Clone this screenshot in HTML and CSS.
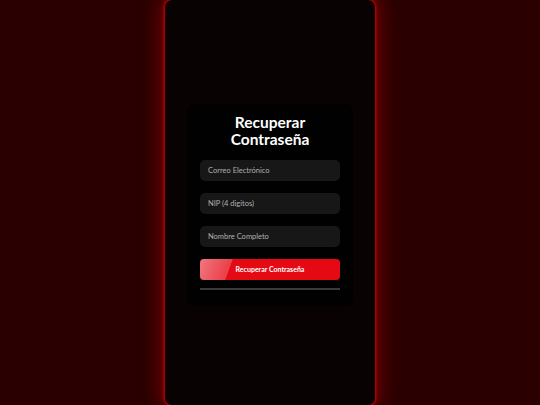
FILE: index.html
```html
<!DOCTYPE html>
<html lang="es">
<head>
<meta charset="utf-8">
<title>Recuperar Contraseña</title>
<link rel="stylesheet" href="styles.css">
</head>
<body>
<div class="phone">
  <div class="card">
    <h1 class="title">Recuperar<br>Contraseña</h1>
    <div class="field">Correo Electrónico</div>
    <div class="field">NIP (4 digitos)</div>
    <div class="field">Nombre Completo</div>
    <button class="btn">Recuperar Contraseña</button>
    <div class="rule"></div>
  </div>
</div>
</body>
</html>
```
FILE: styles.css
```css
html, body {
  margin: 0;
  padding: 0;
  height: 100%;
}
body {
  background: #2a0000;
  display: flex;
  justify-content: center;
  font-family: Lato, "Noto Sans", sans-serif;
  overflow: hidden;
}
.phone {
  width: 210px;
  height: 405px;
  background: #080202;
  border-radius: 7px;
  box-shadow: 0 0 3px 1px rgba(235, 0, 0, 0.9), 0 0 20px 5px rgba(190, 0, 0, 0.5);
  display: flex;
  align-items: center;
  justify-content: center;
}
.card {
  width: 140px;
  padding: 10px 13px 16px;
  background: #010101;
  border-radius: 8px;
  display: flex;
  flex-direction: column;
  gap: 12px;
  margin-top: 4px;
}
.title {
  margin: 0;
  color: #fff;
  font-size: 15.5px;
  line-height: 17px;
  font-weight: 700;
  text-align: center;
}
.field {
  height: 21px;
  background: #181717;
  border-radius: 5px;
  color: #b0b0b0;
  font-size: 7.5px;
  line-height: 21px;
  padding-left: 8px;
}
.btn {
  height: 21px;
  border: none;
  border-radius: 4px;
  background: linear-gradient(110deg, rgba(255,255,255,0.45) 0%, rgba(255,255,255,0.22) 22%, rgba(255,255,255,0) 22.5%), #e50914;
  color: #fff;
  font-family: Lato, "Noto Sans", sans-serif;
  font-size: 7px;
  font-weight: 700;
  padding: 0;
}
.rule {
  height: 2px;
  background: #3a3a3a;
  margin-top: -4px;
}
```
